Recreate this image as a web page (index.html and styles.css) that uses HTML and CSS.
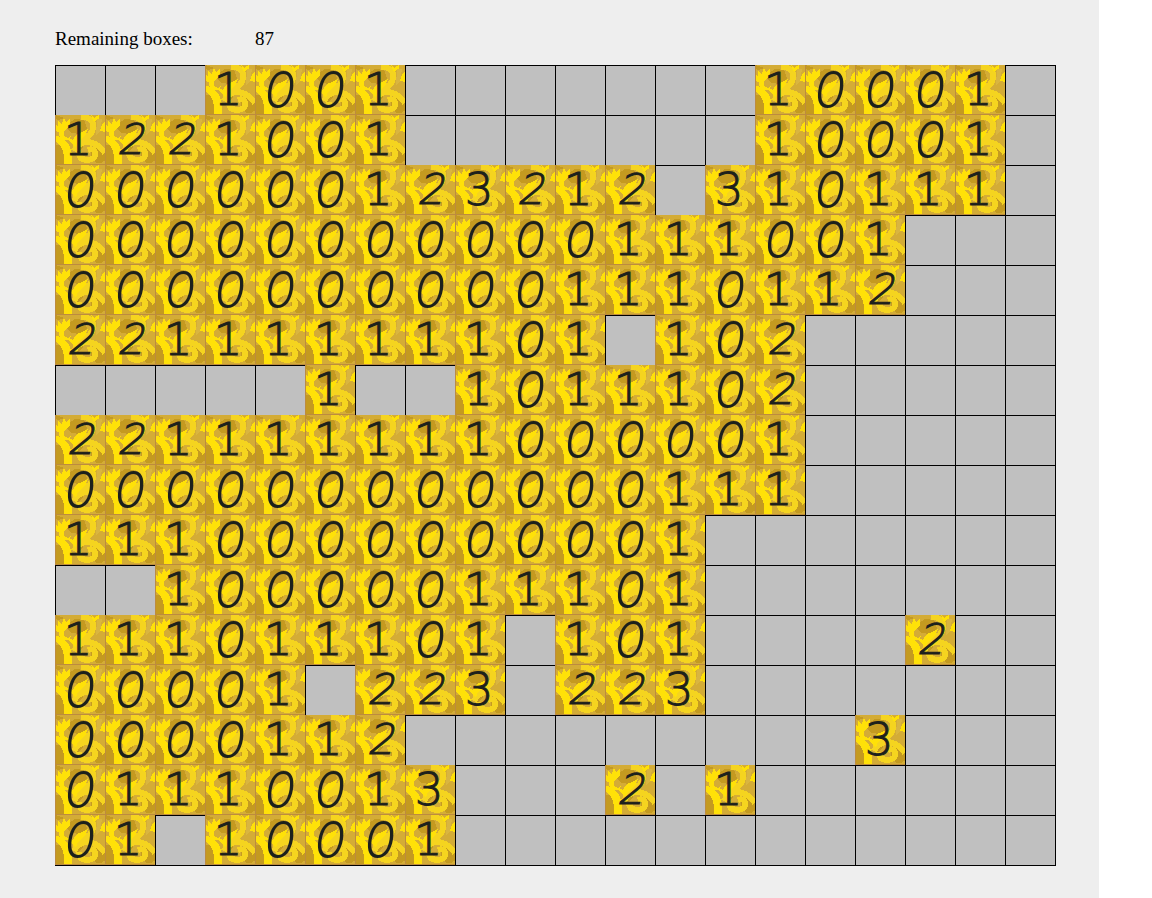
FILE: index.html
```html
<!DOCTYPE html>
<html lang="en">
<head>
<meta charset="utf-8">
<title>Minesweeper</title>
<link rel="stylesheet" href="styles.css">
</head>
<body>
<main class="game">
  <p class="status"><span>Remaining boxes:</span><output class="count">87</output></p>
  <div class="board" id="board"></div>
</main>
<script src="board.js"></script>
</body>
</html>
```
FILE: styles.css
```css
* { box-sizing: border-box; }
body {
  margin: 0;
  background: #fff;
  color: #000;
  font-family: "Liberation Serif", "Times New Roman", serif;
}
.game {
  min-height: 100vh;
  margin-right: 53px;
  padding: 28px 43px 32px 55px;
  background: #eee;
}
.status {
  display: grid;
  grid-template-columns: 200px auto;
  margin: 0 0 15px;
  font-size: 19px;
  line-height: 22px;
}
.board {
  display: grid;
  grid-template-columns: repeat(20, 50px);
  grid-auto-rows: 50px;
  width: max-content;
  border: solid #000;
  border-width: 0 1px 1px 0;
}
.cell {
  display: flex;
  align-items: center;
  justify-content: center;
  margin: 0;
  padding: 0;
  border: solid #000;
  border-width: 1px 0 0 1px;
  border-radius: 0;
  background: silver;
  color: #1c201c;
  font-family: "DejaVu Sans Light", "DejaVu Sans", sans-serif;
  font-weight: 200;
  line-height: 48px;
  -webkit-text-stroke: 1px #1c201c;
}
.open {
  border: 0;
  background: url("data:image/svg+xml,%3Csvg xmlns='http://www.w3.org/2000/svg' viewBox='0 0 50 50' shape-rendering='crispEdges'%3E%3Cpath fill='%23d4ac36' d='M0 0h50v50H0z'/%3E%3Cg fill='%23c49a20'%3E%3Ccircle cx='4' cy='40' r='10'/%3E%3Ccircle cx='44' cy='40' r='8'/%3E%3Cpath d='M14 8l6-4 9 1 3 8-6 6-10-1-4-5zM24 29l6-3-3 8-6 5zM0 0l9 3-5 2-4-1z'/%3E%3C/g%3E%3Cg fill='none' stroke='%23f5d41f' stroke-width='6'%3E%3Cpath d='M26 2q13 0 12 10 0 8-9 11-6 3-8 9M19 36q4-9 14-9 10 1 17 11M24 37q0 8 9 8 8-1 7-7-1-5-7-3'/%3E%3C/g%3E%3Cg fill='%23ffe108'%3E%3Cpath d='M0 20q11 3 15 12 3 7 2 18H9q1-12-3-18-2-4-6-6zM0 10l3 1 0-5 4 3 2-6 2 4 4-3 0 6-4 4q-4 4-1 8 3 2 6-1-1 5-6 4-7-1-6-8L0 16zM18 25q2-6 9-8l6-3-3 7q-7 4-9 11l-5-4-5-6zM36 0l3 3 5-3v4l-5 3zM47 9l3-3v11l-5-1z'/%3E%3C/g%3E%3Cpath fill='%23d9b541' d='M42 4h5l-2 12-4 4z'/%3E%3Cpath fill='none' stroke='%23bd8b3e' d='M0 49.500h50M.500 0v50'/%3E%3C/svg%3E") center / 100% 100%;
}
.n0 {
  font-family: Inter, sans-serif;
  font-size: 50px;
  font-style: italic;
  font-weight: 300;
  line-height: 48px;
  -webkit-text-stroke: 0;
}
.n1 { padding-right: 4px; font-size: 45px; }
.n2 { font-size: 42px; font-style: oblique; }
.n3 { padding-right: 2px; font-size: 45px; }
```
FILE: board.js
```js
const rows = [
  "...1001.......10001.",
  "1221001.......10001.",
  "000000123212.310111.",
  "00000000000111001...",
  "00000000001110112...",
  "22111111101.102.....",
  ".....1..1011102.....",
  "221111111000001.....",
  "000000000000111.....",
  "1110000000001.......",
  "..10000011101.......",
  "111011101.101....2..",
  "00001.223.223.......",
  "0000112.........3...",
  "01110013...2.1......",
  "01.10001............"
];

const board = document.getElementById("board");
for (const [y, row] of rows.entries()) {
  for (const [x, value] of [...row].entries()) {
    const cell = document.createElement("button");
    cell.type = "button";
    cell.className = "cell";
    if (value === ".") {
      cell.setAttribute("aria-label", `Covered box, row ${y + 1}, column ${x + 1}`);
    } else {
      cell.classList.add("open", `n${value}`);
      cell.textContent = value;
    }
    board.append(cell);
  }
}
```
